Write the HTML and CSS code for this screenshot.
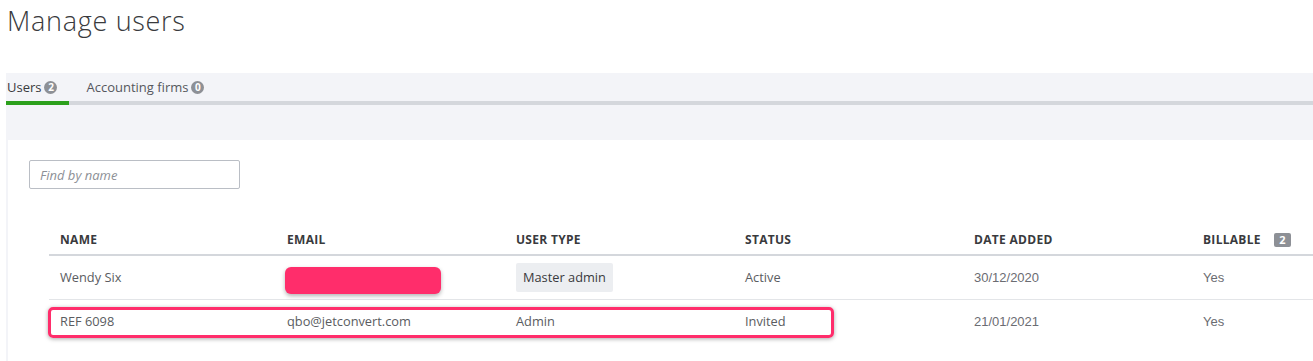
FILE: index.html
```html
<!DOCTYPE html>
<html lang="en">
<head>
    <meta charset="UTF-8">
    <title>Manage users</title>
    <link rel="stylesheet" href="styles.css">
</head>
<body>
    <h1 class="page-title">Manage users</h1>

    <div class="page-body">
        <div class="tabs-band">
            <div class="tabs">
                <div class="tab active">Users <span class="tab-count">2</span></div>
                <div class="tab">Accounting firms <span class="tab-count">0</span></div>
            </div>
        </div>

        <div class="users-card">
            <input class="search-input" type="text" placeholder="Find by name">

            <div class="table-wrap">
                <table class="users-table">
                    <thead>
                        <tr>
                            <th>Name</th>
                            <th>Email</th>
                            <th>User type</th>
                            <th>Status</th>
                            <th>Date added</th>
                            <th>Billable <span class="billable-count">2</span></th>
                        </tr>
                    </thead>
                    <tbody>
                        <tr>
                            <td>Wendy Six</td>
                            <td><span class="redacted"></span></td>
                            <td><span class="type-pill">Master admin</span></td>
                            <td>Active</td>
                            <td class="plain">30/12/2020</td>
                            <td class="plain">Yes</td>
                        </tr>
                        <tr>
                            <td>REF 6098</td>
                            <td>qbo@jetconvert.com</td>
                            <td>Admin</td>
                            <td>Invited</td>
                            <td class="plain">21/01/2021</td>
                            <td class="plain">Yes</td>
                        </tr>
                    </tbody>
                </table>
                <!-- annotation drawn over the second row -->
                <div class="row-highlight"></div>
            </div>
        </div>
    </div>
</body>
</html>
```

FILE: styles.css
```css
body {
    margin: 0;
    font-family: "Open Sans", "Liberation Sans", sans-serif;
    color: #393a3d;
    background-color: #fff;
    overflow: hidden;
}

.page-title {
    margin: 0;
    padding: 2px 7px 0;
    height: 71px;
    font-size: 27px;
    font-weight: 300;
    letter-spacing: 0.7px;
    color: #393a3d;
}

.page-body {
    margin-left: 6px;
    background-color: #f3f4f8;
    height: 288px;
}

.tabs-band {
    height: 67px;
}

.tabs {
    display: flex;
    border-bottom: 4px solid #d4d7dc;
    padding-top: 4px;
}

.tab {
    font-size: 13px;
    line-height: 20px;
    padding: 0 0 4px 1px;
    margin-right: 16px;
    margin-bottom: -4px;
    border-bottom: 4px solid transparent;
    color: #55575d;
    display: flex;
    align-items: center;
}

.tab.active {
    color: #393a3d;
    border-bottom-color: #2ca01c;
    padding-right: 12px;
}

.tab-count {
    display: inline-block;
    width: 13px;
    height: 13px;
    border-radius: 50%;
    margin-left: 3px;
    background-color: #8d9096;
    color: #fff;
    font-size: 10px;
    font-weight: 700;
    line-height: 13px;
    text-align: center;
}

.users-card {
    margin-left: 2px;
    background-color: #fff;
    height: 201px;
    padding: 20px 0 0 21px;
    overflow: hidden;
}

.search-input {
    display: block;
    box-sizing: border-box;
    width: 211px;
    height: 29px;
    border: 1px solid #babec5;
    border-radius: 2px;
    padding: 0 10px;
    font-family: inherit;
    font-size: 13px;
    outline: none;
}

.search-input::placeholder {
    color: #8d9096;
    font-style: italic;
}

.table-wrap {
    position: relative;
    margin: 34px 0 0 20px;
}

.users-table {
    border-collapse: collapse;
    table-layout: fixed;
    width: 1372px;
}

.users-table th,
.users-table td {
    width: 229px;
    padding: 0 0 0 11px;
    text-align: left;
    box-sizing: border-box;
}

.users-table th:first-child,
.users-table td:first-child {
    width: 227px;
}

.users-table th {
    height: 32px;
    padding-top: 2px;
    border-bottom: 2px solid #d4d7dc;
    font-size: 12px;
    font-weight: 700;
    letter-spacing: 0.3px;
    text-transform: uppercase;
    color: #393a3d;
}

.users-table td {
    height: 44px;
    border-bottom: 1px solid #e3e5e8;
    font-size: 12.8px;
    color: #5a5c61;
}

.users-table tbody tr:last-child td {
    border-bottom: none;
}

.users-table td.plain {
    font-family: "Liberation Sans", Arial, sans-serif;
    font-size: 13px;
    color: #6b6c72;
}

.billable-count {
    display: inline-block;
    margin-left: 10px;
    padding: 0 5px;
    height: 14px;
    line-height: 14px;
    border-radius: 2px;
    background-color: #8d9096;
    color: #fff;
    font-size: 11px;
}

.type-pill {
    display: inline-block;
    padding: 5px 7px 6px;
    line-height: 18px;
    border-radius: 2px;
    background-color: #eceef1;
    color: #393a3d;
}

.redacted {
    display: block;
    width: 156px;
    height: 27px;
    margin-left: -2px;
    border-radius: 6px;
    background-color: #ff2d6b;
    box-shadow: 0 2px 4px rgba(0, 0, 0, 0.3);
    transform: translateY(3px);
}

.row-highlight {
    position: absolute;
    left: -1px;
    top: 84px;
    width: 786px;
    height: 31px;
    box-sizing: border-box;
    border: 3px solid #ff2d6b;
    border-radius: 5px;
    box-shadow: 0 1px 4px rgba(0, 0, 0, 0.35);
}
```
